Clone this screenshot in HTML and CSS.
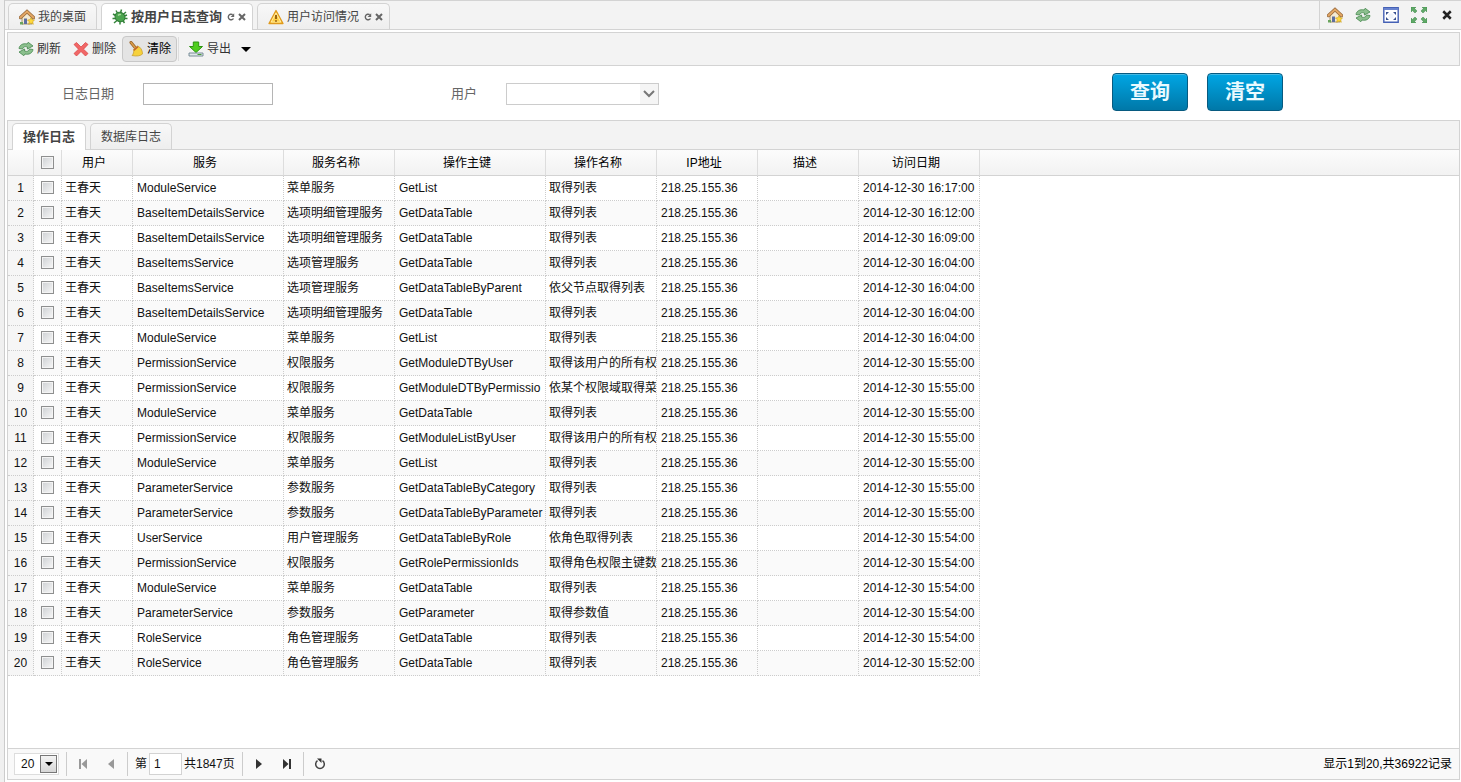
FILE: index.html
```html
<!DOCTYPE html>
<html lang="zh-CN">
<head>
<meta charset="utf-8">
<title>按用户日志查询</title>
<link rel="stylesheet" href="styles.css">
</head>
<body>
<svg class="sprite" aria-hidden="true">
  <symbol id="home" viewBox="0 0 16 16">
    <path d="M3 8v7h10V8L8 3z" fill="#f4ead2" stroke="#a89468"/>
    <path d="M1.500 8.500 8 2.500l6.500 6" fill="none" stroke="#96683c" stroke-width="3.400" stroke-linecap="round"/>
    <path d="M1.500 8.500 8 2.500l6.500 6" fill="none" stroke="#e3a765" stroke-width="1.900" stroke-linecap="round"/>
    <path d="M5 15V9.500h3V15z" fill="#5d6ea0"/>
    <path d="M1 13h3v2.500H1z" fill="#6aa45c"/>
    <path d="m12 8.500 1 2.200 2.500.3-1.800 1.800.6 2.500-2.300-1.200-2.300 1.200.6-2.500L8.500 11l2.500-.3z" fill="#ffd93b" stroke="#c99c1c" stroke-width=".6"/>
  </symbol>
  <symbol id="refresh" viewBox="0 0 16 16">
    <path d="M1 7.500C1.500 4 5 2 9 3l1.200-1.700L15 5 9.300 8l.2-2C7 5 5 6 4.500 8z" fill="#8cc08e" stroke="#4f8f57" stroke-width=".9" stroke-linejoin="round"/>
    <path d="M15 8.500c-.5 3.500-4 5.500-8 4.500l-1.200 1.700L1 11l5.700-3-.2 2c2.500 1 4.500 0 5-2z" fill="#8cc08e" stroke="#4f8f57" stroke-width=".9" stroke-linejoin="round"/>
  </symbol>
  <symbol id="bug" viewBox="0 0 16 16">
    <path d="M4 1.500 6 5M9.500.5 8.500 4M14 3l-3 2.500M1 5l3.500 2M.5 9.500h4M2 14l3.500-3M8 15.500v-4M12.500 14l-2-3M15.500 9.500h-4M15 6l-4 1.500" fill="none" stroke="#35853b" stroke-width="1.500"/>
    <ellipse cx="8" cy="8" rx="5.200" ry="4.600" transform="rotate(35 8 8)" fill="#4ba54e" stroke="#2f7c36"/>
    <path d="M6 6.500c1-1.200 2-1.200 3-.8" fill="none" stroke="#a8dc9c" stroke-width="1.300"/>
  </symbol>
  <symbol id="warn" viewBox="0 0 16 16">
    <path d="M8 1.500 15 14.500H1z" fill="#ffcf45" stroke="#e09a1e" stroke-width="1.300" stroke-linejoin="round"/>
    <path d="M8 4 12.800 13H3.200z" fill="none" stroke="#fff0b5" stroke-width=".8"/>
    <path d="M8 6v4M8 11.200v1.500" stroke="#8a5205" stroke-width="1.700"/>
  </symbol>
  <symbol id="reload" viewBox="0 0 8 8">
    <path d="M6.500 5.500A2.800 2.800 0 1 1 5.700 1.700" fill="none" stroke="#666" stroke-width="1.400"/>
    <path d="M7.200.2v3.900H3.600z" fill="#666"/>
  </symbol>
  <symbol id="close" viewBox="0 0 8 8"><path d="m1 1 6 6M7 1 1 7" stroke="currentColor" stroke-width="2"/></symbol>
  <symbol id="screen" viewBox="0 0 16 16">
    <path d="M.8.800h14.400v14.400H.8z" fill="#fff" stroke="#4561b5" stroke-width="1.400"/>
    <path d="M1 2h14" stroke="#6883cf" stroke-width="2"/>
    <path d="M3 8V5h3zM10 5h3v3zM3 10v3h3zM10 13h3v-3z" fill="#37508f"/>
    <path d="M5.500 6.500h5v5h-5z" fill="#eef3fc"/>
  </symbol>
  <symbol id="expand" viewBox="0 0 16 16">
    <path d="M0 0h5L3.600 1.400 6 4 4 6 1.400 3.600 0 5zM16 0v5l-1.400-1.400L12 6l-2-2 2.400-2.600L11 0zM0 16v-5l1.400 1.400L4 10l2 2-2.400 2.600L5 16zM16 16h-5l1.400-1.400L10 12l2-2 2.600 2.400L16 11z" fill="#5fa967" stroke="#3b8547" stroke-width=".5"/>
  </symbol>
  <symbol id="delete" viewBox="0 0 16 16">
    <path d="M3.500 1.500 8 6l4.500-4.500L15 3.500 10.500 8.200 15 12.500 12.500 15 8 10.500 3.500 15 1 12.500l4.500-4.300L1 3.500z" fill="#f16767" stroke="#d83f3f" stroke-width=".7" stroke-linejoin="round"/>
  </symbol>
  <symbol id="broom" viewBox="0 0 16 16">
    <path d="M3 1.500 7.500 7" stroke="#9a6324" stroke-width="3" stroke-linecap="round"/>
    <path d="M3 1.500 7.500 7" stroke="#dca04e" stroke-width="1.400" stroke-linecap="round"/>
    <path d="m5.500 8.500 4-3.500c3 1 5 4 5 8-2 2-6 2.500-10.500 1.500 1.500-1.500 2-3.500 1.500-6z" fill="#f6d13c" stroke="#c49a25" stroke-width=".7"/>
    <path d="m5.500 8.500 4-3.500 1 1.300-4.300 3.800z" fill="#c2632e"/>
  </symbol>
  <symbol id="export" viewBox="0 0 16 16">
    <path d="M5.300 1h5.400v4.500H14.500L8 11.500 1.500 5.500h3.800z" fill="#4fce1d" stroke="#2d9410" stroke-linejoin="round"/>
    <path d="M1 12h14v3H1z" fill="#e1e7ea" stroke="#6d8490" stroke-width=".9"/>
    <path d="M9.500 13.500h4" stroke="#4a9b3a"/>
  </symbol>
</svg>

<div class="app">
  <header class="tabbar">
    <nav class="tabs">
      <button class="tab"><svg class="icon"><use href="#home"/></svg>我的桌面</button>
      <div class="tab active"><svg class="icon"><use href="#bug"/></svg><span>按用户日志查询</span>
        <button class="mini" aria-label="刷新标签"><svg><use href="#reload"/></svg></button>
        <button class="mini" aria-label="关闭标签"><svg><use href="#close"/></svg></button></div>
      <div class="tab"><svg class="icon"><use href="#warn"/></svg><span>用户访问情况</span>
        <button class="mini" aria-label="刷新标签"><svg><use href="#reload"/></svg></button>
        <button class="mini" aria-label="关闭标签"><svg><use href="#close"/></svg></button></div>
    </nav>
    <div class="window-tools">
      <button aria-label="主页"><svg class="icon"><use href="#home"/></svg></button>
      <button aria-label="刷新"><svg class="icon"><use href="#refresh"/></svg></button>
      <button aria-label="窗口"><svg class="icon"><use href="#screen"/></svg></button>
      <button aria-label="全屏"><svg class="icon"><use href="#expand"/></svg></button>
      <button aria-label="关闭"><svg class="close-big"><use href="#close"/></svg></button>
    </div>
  </header>

  <main class="page">
    <div class="toolbar">
      <button class="tool"><svg class="icon"><use href="#refresh"/></svg>刷新</button>
      <button class="tool"><svg class="icon"><use href="#delete"/></svg>删除</button>
      <button class="tool pressed"><svg class="icon"><use href="#broom"/></svg>清除</button>
      <span class="tool-sep"></span>
      <button class="tool"><svg class="icon"><use href="#export"/></svg>导出<span class="caret"></span></button>
    </div>

    <form class="search">
      <div class="field"><label for="logdate">日志日期</label><input id="logdate" type="text"></div>
      <div class="field"><label for="user">用户</label>
        <span class="combo"><select id="user"><option></option></select><svg viewBox="0 0 18 20"><path d="m4 7 5 5 5-5" fill="none" stroke="#777" stroke-width="2"/></svg></span></div>
      <div class="actions"><button type="button">查询</button><button type="button">清空</button></div>
    </form>

    <section class="logs">
      <nav class="subtabs"><button class="active">操作日志</button><button>数据库日志</button></nav>
      <div class="grid">
        <table>
          <colgroup><col class="c-num"><col class="c-chk"><col class="c-user"><col class="c-wide"><col class="c-name"><col class="c-wide"><col class="c-name"><col class="c-ip"><col class="c-ip"><col class="c-time"><col></colgroup>
          <thead><tr><th></th><th><input type="checkbox" aria-label="全选"></th><th>用户</th><th>服务</th><th>服务名称</th><th>操作主键</th><th>操作名称</th><th>IP地址</th><th>描述</th><th>访问日期</th><th class="filler"></th></tr></thead>
          <tbody>
            <tr><td>1</td><td><input type="checkbox" aria-label="1"></td><td>王春天</td><td>ModuleService</td><td>菜单服务</td><td>GetList</td><td>取得列表</td><td>218.25.155.36</td><td></td><td>2014-12-30 16:17:00</td></tr>
            <tr><td>2</td><td><input type="checkbox" aria-label="2"></td><td>王春天</td><td>BaseItemDetailsService</td><td>选项明细管理服务</td><td>GetDataTable</td><td>取得列表</td><td>218.25.155.36</td><td></td><td>2014-12-30 16:12:00</td></tr>
            <tr><td>3</td><td><input type="checkbox" aria-label="3"></td><td>王春天</td><td>BaseItemDetailsService</td><td>选项明细管理服务</td><td>GetDataTable</td><td>取得列表</td><td>218.25.155.36</td><td></td><td>2014-12-30 16:09:00</td></tr>
            <tr><td>4</td><td><input type="checkbox" aria-label="4"></td><td>王春天</td><td>BaseItemsService</td><td>选项管理服务</td><td>GetDataTable</td><td>取得列表</td><td>218.25.155.36</td><td></td><td>2014-12-30 16:04:00</td></tr>
            <tr><td>5</td><td><input type="checkbox" aria-label="5"></td><td>王春天</td><td>BaseItemsService</td><td>选项管理服务</td><td>GetDataTableByParent</td><td>依父节点取得列表</td><td>218.25.155.36</td><td></td><td>2014-12-30 16:04:00</td></tr>
            <tr><td>6</td><td><input type="checkbox" aria-label="6"></td><td>王春天</td><td>BaseItemDetailsService</td><td>选项明细管理服务</td><td>GetDataTable</td><td>取得列表</td><td>218.25.155.36</td><td></td><td>2014-12-30 16:04:00</td></tr>
            <tr><td>7</td><td><input type="checkbox" aria-label="7"></td><td>王春天</td><td>ModuleService</td><td>菜单服务</td><td>GetList</td><td>取得列表</td><td>218.25.155.36</td><td></td><td>2014-12-30 16:04:00</td></tr>
            <tr><td>8</td><td><input type="checkbox" aria-label="8"></td><td>王春天</td><td>PermissionService</td><td>权限服务</td><td>GetModuleDTByUser</td><td>取得该用户的所有权</td><td>218.25.155.36</td><td></td><td>2014-12-30 15:55:00</td></tr>
            <tr><td>9</td><td><input type="checkbox" aria-label="9"></td><td>王春天</td><td>PermissionService</td><td>权限服务</td><td>GetModuleDTByPermissio</td><td>依某个权限域取得菜</td><td>218.25.155.36</td><td></td><td>2014-12-30 15:55:00</td></tr>
            <tr><td>10</td><td><input type="checkbox" aria-label="10"></td><td>王春天</td><td>ModuleService</td><td>菜单服务</td><td>GetDataTable</td><td>取得列表</td><td>218.25.155.36</td><td></td><td>2014-12-30 15:55:00</td></tr>
            <tr><td>11</td><td><input type="checkbox" aria-label="11"></td><td>王春天</td><td>PermissionService</td><td>权限服务</td><td>GetModuleListByUser</td><td>取得该用户的所有权</td><td>218.25.155.36</td><td></td><td>2014-12-30 15:55:00</td></tr>
            <tr><td>12</td><td><input type="checkbox" aria-label="12"></td><td>王春天</td><td>ModuleService</td><td>菜单服务</td><td>GetList</td><td>取得列表</td><td>218.25.155.36</td><td></td><td>2014-12-30 15:55:00</td></tr>
            <tr><td>13</td><td><input type="checkbox" aria-label="13"></td><td>王春天</td><td>ParameterService</td><td>参数服务</td><td>GetDataTableByCategory</td><td>取得列表</td><td>218.25.155.36</td><td></td><td>2014-12-30 15:55:00</td></tr>
            <tr><td>14</td><td><input type="checkbox" aria-label="14"></td><td>王春天</td><td>ParameterService</td><td>参数服务</td><td>GetDataTableByParameter</td><td>取得列表</td><td>218.25.155.36</td><td></td><td>2014-12-30 15:55:00</td></tr>
            <tr><td>15</td><td><input type="checkbox" aria-label="15"></td><td>王春天</td><td>UserService</td><td>用户管理服务</td><td>GetDataTableByRole</td><td>依角色取得列表</td><td>218.25.155.36</td><td></td><td>2014-12-30 15:54:00</td></tr>
            <tr><td>16</td><td><input type="checkbox" aria-label="16"></td><td>王春天</td><td>PermissionService</td><td>权限服务</td><td>GetRolePermissionIds</td><td>取得角色权限主键数</td><td>218.25.155.36</td><td></td><td>2014-12-30 15:54:00</td></tr>
            <tr><td>17</td><td><input type="checkbox" aria-label="17"></td><td>王春天</td><td>ModuleService</td><td>菜单服务</td><td>GetDataTable</td><td>取得列表</td><td>218.25.155.36</td><td></td><td>2014-12-30 15:54:00</td></tr>
            <tr><td>18</td><td><input type="checkbox" aria-label="18"></td><td>王春天</td><td>ParameterService</td><td>参数服务</td><td>GetParameter</td><td>取得参数值</td><td>218.25.155.36</td><td></td><td>2014-12-30 15:54:00</td></tr>
            <tr><td>19</td><td><input type="checkbox" aria-label="19"></td><td>王春天</td><td>RoleService</td><td>角色管理服务</td><td>GetDataTable</td><td>取得列表</td><td>218.25.155.36</td><td></td><td>2014-12-30 15:54:00</td></tr>
            <tr><td>20</td><td><input type="checkbox" aria-label="20"></td><td>王春天</td><td>RoleService</td><td>角色管理服务</td><td>GetDataTable</td><td>取得列表</td><td>218.25.155.36</td><td></td><td>2014-12-30 15:52:00</td></tr>
          </tbody>
        </table>
      </div>
      <footer class="pager">
        <span class="size"><select aria-label="每页条数"><option>20</option></select><i></i></span>
        <span class="sep"></span>
        <button class="off" aria-label="首页"><svg viewBox="0 0 16 16"><path d="M4 3h2v10H4zM12 3v10L6.500 8z"/></svg></button>
        <button class="off" aria-label="上一页"><svg viewBox="0 0 16 16"><path d="M11 3v10L5 8z"/></svg></button>
        <span class="sep"></span>
        <label for="pageno">第</label><input id="pageno" type="text" value="1"><span>共1847页</span>
        <span class="sep"></span>
        <button aria-label="下一页"><svg viewBox="0 0 16 16"><path d="M5 3v10l6-5z"/></svg></button>
        <button aria-label="末页"><svg viewBox="0 0 16 16"><path d="M10 3h2v10h-2zM4 3v10l5.500-5z"/></svg></button>
        <span class="sep"></span>
        <button aria-label="刷新列表"><svg viewBox="0 0 16 16"><path d="M5.500 4.700a4.300 4.300 0 1 0 5 0" fill="none" stroke="#444" stroke-width="1.500"/><path d="M5 2.500h4.500V7z"/></svg></button>
        <span class="summary">显示1到20,共36922记录</span>
      </footer>
    </section>
  </main>
</div>
</body>
</html>
```
FILE: styles.css
```css
* { box-sizing: border-box; }
body {
  margin: 0;
  background: #f0f0f0;
  color: #111;
  font: 12px/16px "Liberation Sans", Arial, "Noto Sans CJK SC", sans-serif;
}
button, input, select { font: inherit; color: inherit; margin: 0; }
button { padding: 0; border: 0; background: none; cursor: pointer; }
.sprite { position: absolute; width: 0; height: 0; }
.icon { width: 16px; height: 16px; flex: none; }

.app {
  display: flex;
  flex-direction: column;
  min-height: 100vh;
  margin-left: 4px;
  border-left: 1px solid #ccc;
  background: #fff;
}

/* Window tabs */
.tabbar {
  display: flex;
  justify-content: space-between;
  height: 30px;
  border-top: 1px solid #d3d3d3;
  border-bottom: 1px solid #d3d3d3;
  background: #f3f3f3;
}
.tabs { display: flex; gap: 4px; padding: 2px 0 0 3px; }
.tab {
  display: flex;
  align-items: center;
  gap: 3px;
  height: 26px;
  padding: 0 10px;
  border: 1px solid #d3d3d3;
  border-bottom: 0;
  border-radius: 5px 5px 0 0;
  background: linear-gradient(#f8f8f8, #eee);
  color: #444;
}
.tab.active { height: 27px; background: #fff; font-size: 13px; font-weight: bold; }
.tab .mini { display: flex; width: 8px; height: 8px; color: #666; }
.tab .mini:first-of-type { margin-left: 2px; }
.mini svg { width: 8px; height: 8px; }
.tab:not(button) { padding-right: 6px; }
.window-tools {
  display: flex;
  align-items: center;
  gap: 12px;
  padding: 0 6px 0 7px;
  border-left: 1px solid #d3d3d3;
}
.window-tools button { display: flex; justify-content: center; width: 16px; height: 16px; align-items: center; }
.close-big { width: 10px; height: 10px; color: #222; }

.page { display: flex; flex: 1; flex-direction: column; padding: 2px 1px 2px 2px; }

.toolbar {
  display: flex;
  align-items: center;
  height: 34px;
  padding: 0 4px;
  border: 1px solid #d3d3d3;
  background: #f3f3f3;
}
.tool {
  display: flex;
  align-items: center;
  gap: 3px;
  height: 26px;
  padding: 0 5px;
  border: 1px solid transparent;
  border-radius: 4px;
  color: #333;
}
.tool.pressed { border-color: #c8c8c8; background: #e4e4e4; color: #000; }
.tool-sep { width: 1px; height: 24px; margin: 0 3px 0 1px; background: #ddd; }
.caret { margin-left: 7px; border: 5px solid transparent; border-top-color: #000; border-bottom: 0; }

/* Search form */
.search {
  display: grid;
  grid-template-columns: 389fr 661fr 348fr;
  align-items: center;
  height: 54px;
  padding-left: 55px;
  background: #fff;
}
.field { display: flex; align-items: center; gap: 29px; padding-top: 1px; color: #666; font-size: 13px; }
.field input {
  width: 130px;
  height: 22px;
  padding: 0 4px;
  border: 1px solid #b5b5b5;
  background: #fff;
}
.combo { position: relative; display: flex; }
.combo select {
  appearance: none;
  width: 153px;
  height: 22px;
  padding: 0 4px;
  border: 1px solid #ccc;
  border-radius: 0;
  background: #fff;
}
.combo svg { position: absolute; top: 1px; right: 1px; width: 18px; height: 20px; background: #f5f5f5; pointer-events: none; }
.actions { display: flex; gap: 19px; padding-bottom: 2px; }
.actions button {
  width: 76px;
  height: 38px;
  border: 1px solid #075a80;
  border-radius: 4px;
  background: linear-gradient(#00a6e4, #0078a8);
  box-shadow: inset 0 1px 0 #45b8e2;
  color: #e9faff;
  font-size: 20px;
  font-weight: bold;
}

/* Log panel */
.logs {
  display: flex;
  flex: 1;
  flex-direction: column;
  border: 1px solid #d3d3d3;
}
.subtabs {
  display: flex;
  align-items: flex-end;
  gap: 4px;
  height: 29px;
  padding-left: 4px;
  border-bottom: 1px solid #d3d3d3;
  background: #f3f3f3;
}
.subtabs button {
  height: 26px;
  padding: 0 10px;
  border: 1px solid #d3d3d3;
  border-bottom: 0;
  border-radius: 5px 5px 0 0;
  background: linear-gradient(#f8f8f8, #eee);
  color: #444;
}
.subtabs .active { height: 27px; margin-bottom: -1px; background: #fff; font-size: 13px; font-weight: bold; }

.grid { flex: 1; background: #fff; }
table { width: 100%; table-layout: fixed; border-collapse: separate; border-spacing: 0; }
.c-num { width: 26px; }
.c-chk { width: 28px; }
.c-user { width: 71px; }
.c-wide { width: 151px; }
.c-name { width: 111px; }
.c-ip { width: 101px; }
.c-time { width: 121px; }
th {
  height: 26px;
  padding: 0 6px 0 0;
  border-right: 1px solid #ddd;
  border-bottom: 1px solid #d3d3d3;
  background: linear-gradient(#fcfcfc, #f2f2f2);
  color: #000;
  font-weight: normal;
}
th.filler { border-right: 0; }
td {
  height: 25px;
  padding: 0 0 0 4px;
  overflow: hidden;
  border-right: 1px dotted #ccc;
  border-bottom: 1px dotted #ccc;
  white-space: nowrap;
}
td:nth-child(3), td:nth-child(5), td:nth-child(7) { padding-left: 3px; }
tbody tr:nth-child(even) td { background: #fafafa; }
tbody tr td:first-child, tbody tr:nth-child(even) td:first-child { padding: 0; background: #f6f6f6; text-align: center; }
td:nth-child(2), th:nth-child(2) { padding: 0 0 1px; text-align: center; }
input[type="checkbox"] {
  appearance: none;
  display: block;
  width: 13px;
  height: 13px;
  margin: 0 auto;
  border: 1px solid #8e8f8f;
  background: linear-gradient(135deg, #cdd0d3, #f8f8f8);
  box-shadow: inset 0 0 0 1px #f4f4f4;
}

/* Pager */
.pager {
  display: flex;
  align-items: center;
  height: 31px;
  padding: 0 7px 0 6px;
  border-top: 1px solid #d3d3d3;
  background: #f9f9f9;
}
.size { position: relative; display: flex; }
.size select {
  appearance: none;
  width: 45px;
  height: 22px;
  padding: 0 6px;
  border: 1px solid #ddd;
  border-radius: 0;
  background: #fff;
}
.size i {
  position: absolute;
  top: 2px;
  right: 2px;
  display: grid;
  place-items: center;
  width: 17px;
  height: 18px;
  border: 1px solid #777;
  background: linear-gradient(#f4f4f4, #d6d6d6);
  pointer-events: none;
}
.size i::after { content: ""; border: 4px solid transparent; border-top-color: #000; border-bottom: 0; }
.sep { width: 1px; height: 24px; margin: 0 7px; background: #ccc; }
.pager button { display: grid; place-items: center; width: 18px; height: 26px; }
.pager button + button { margin-left: 10px; }
.pager svg { width: 16px; height: 16px; fill: #333; }
.pager .off svg { fill: #999; }
.pager input { width: 33px; height: 22px; margin: 0 2px; padding: 0 4px; border: 1px solid #d3d3d3; background: #fff; }
.summary { margin-left: auto; color: #000; }
```
